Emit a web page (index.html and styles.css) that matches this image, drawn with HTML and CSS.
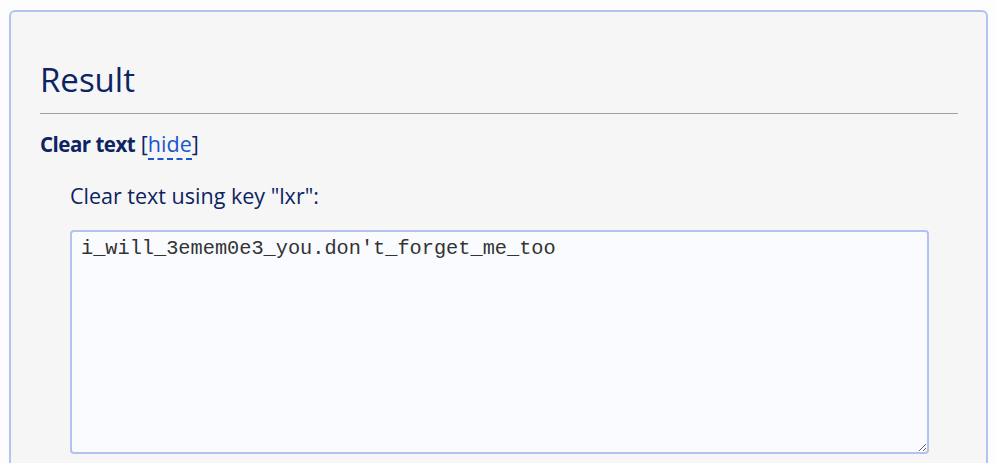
FILE: index.html
```html
<!DOCTYPE html>
<html>
<head>
<meta charset="utf-8">
<link rel="stylesheet" href="styles.css">
</head>
<body>
<div class="panel">
  <h2 class="title">Result</h2>
  <div class="section-head"><span class="label">Clear text</span> <span class="toggle">[<a class="hide-link">hide</a>]</span></div>
  <div class="section-body">
    <p class="caption">Clear text using key "lxr":</p>
    <textarea class="output" spellcheck="false">i_will_3emem0e3_you.don't_forget_me_too</textarea>
  </div>
</div>
</body>
</html>
```
FILE: styles.css
```css
html, body {
  margin: 0;
  padding: 0;
  background: #fdfdfd;
}
body {
  padding: 10px 8px 0 9px;
  font-family: "Open Sans", "Noto Sans", sans-serif;
  color: #0c2462;
  overflow: hidden;
  height: 463px;
  box-sizing: border-box;
}
.panel {
  border: 2px solid #b4c2f0;
  border-bottom: none;
  border-radius: 6px 6px 0 0;
  background: #f6f6f6;
  padding: 48px 28px 40px 29px;
  height: 460px;
  box-sizing: border-box;
}
.title {
  margin: 0;
  font-weight: 400;
  font-size: 33px;
  line-height: 40px;
  color: #0c2462;
  padding-bottom: 13px;
  border-bottom: 1px solid #a0a0a0;
}
.section-head {
  margin-top: 17px;
  font-size: 21.5px;
  line-height: 26px;
}
.label {
  font-weight: 700;
  font-size: 20.5px;
  letter-spacing: -0.5px;
}
.toggle {
  color: #0c2462;
}
.hide-link {
  color: #1a56cc;
  border-bottom: 2px dashed #1a56cc;
}
.section-body {
  padding: 0 29px 0 30px;
}
.caption {
  margin: 26px 0 21px;
  font-size: 21.5px;
  line-height: 26px;
}
.output {
  display: block;
  width: 100%;
  box-sizing: border-box;
  height: 224px;
  border: 2px solid #b4c2f0;
  border-radius: 4px;
  background: #f9fbff;
  font-family: "Liberation Mono", "Courier New", monospace;
  font-size: 20.3px;
  line-height: 24px;
  color: #333;
  padding: 5px 9px;
  resize: both;
  margin: 0;
}
```
